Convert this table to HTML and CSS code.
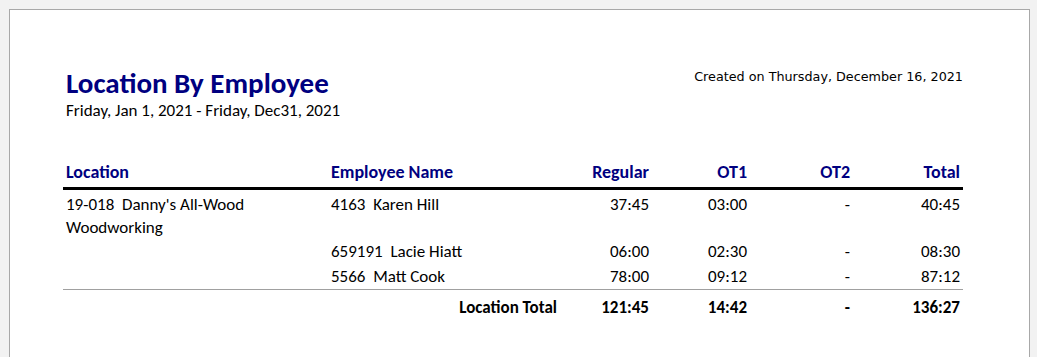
FILE: index.html
```html
<!DOCTYPE html>
<html>
<head>
<meta charset="utf-8">
<link rel="stylesheet" href="styles.css">
</head>
<body>
<div class="paper">
  <div class="head">
    <div class="titles">
      <h1 class="title">Location By Employee</h1>
      <div class="range">Friday, Jan 1, 2021 - Friday, Dec31, 2021</div>
    </div>
    <div class="created">Created on Thursday, December 16, 2021</div>
  </div>
  <table class="report">
    <colgroup>
      <col class="c-loc"><col class="c-emp"><col class="c-reg"><col class="c-ot1"><col class="c-ot2"><col class="c-tot">
    </colgroup>
    <thead>
      <tr>
        <th class="left">Location</th>
        <th class="left">Employee Name</th>
        <th>Regular</th>
        <th>OT1</th>
        <th>OT2</th>
        <th>Total</th>
      </tr>
    </thead>
    <tbody>
      <tr class="first">
        <td class="left" rowspan="2">19-018&nbsp; Danny's All-Wood Woodworking</td>
        <td class="left">4163&nbsp; Karen Hill</td>
        <td>37:45</td><td>03:00</td><td>-</td><td>40:45</td>
      </tr>
      <tr class="spacer"><td class="left"></td><td></td><td></td><td></td><td></td></tr>
      <tr class="second">
        <td></td>
        <td class="left">659191&nbsp; Lacie Hiatt</td>
        <td>06:00</td><td>02:30</td><td>-</td><td>08:30</td>
      </tr>
      <tr class="last">
        <td></td>
        <td class="left">5566&nbsp; Matt Cook</td>
        <td>78:00</td><td>09:12</td><td>-</td><td>87:12</td>
      </tr>
    </tbody>
    <tfoot>
      <tr>
        <td colspan="2" class="sumlabel">Location Total</td>
        <td>121:45</td><td>14:42</td><td>-</td><td>136:27</td>
      </tr>
    </tfoot>
  </table>
</div>
</body>
</html>
```
FILE: styles.css
```css
html, body {
  margin: 0;
  padding: 0;
}
body {
  background: #f2f2f2;
  font-family: "Carlito", "Lato", sans-serif;
  color: #000;
  overflow: hidden;
  height: 357px;
}
.paper {
  margin: 9px 0 0 9px;
  width: 1021px;
  height: 400px;
  background: #fff;
  border: 1px solid #a8a8a8;
  box-sizing: border-box;
  padding: 57px 0 0 53px;
}
.head {
  display: flex;
  justify-content: space-between;
  width: 897px;
  padding-left: 3px;
}
.title {
  margin: 0;
  font-size: 29px;
  line-height: 32px;
  font-weight: 700;
  color: #000080;
}
.range {
  font-size: 17px;
  line-height: 18px;
  margin-top: 3px;
}
.created {
  font-family: "DejaVu Sans", sans-serif;
  font-size: 12.75px;
  line-height: 16px;
  margin-top: 2px;
}
.report {
  margin-top: 42px;
  border-collapse: collapse;
  table-layout: fixed;
  width: 900px;
  font-size: 17px;
}
.c-loc { width: 265px; }
.c-emp { width: 230px; }
.c-reg { width: 94px; }
.c-ot1 { width: 98px; }
.c-ot2 { width: 103px; }
.c-tot { width: 110px; }
.report th, .report td {
  padding: 0 3px;
  text-align: right;
  vertical-align: top;
  font-weight: normal;
}
.report .left { text-align: left; }
.report th {
  color: #000080;
  font-weight: 700;
  font-size: 18px;
  line-height: 20px;
  padding-bottom: 5px;
  border-bottom: 3px solid #000;
}
.report tbody td {
  line-height: 23px;
}
.report tbody tr.first td { padding-top: 3px; }
.report tbody tr.spacer td { height: 23px; padding: 0; }
.report tbody tr.second td { padding-top: 1px; }
.report tbody tr.last td { padding-top: 2px; padding-bottom: 1px; }
.report tbody tr.last { border-bottom: 1px solid #a0a0a0; }
.report tfoot td {
  font-weight: 700;
  line-height: 20px;
  padding-top: 8px;
}
.report .sumlabel { padding-right: 1px; }
```
